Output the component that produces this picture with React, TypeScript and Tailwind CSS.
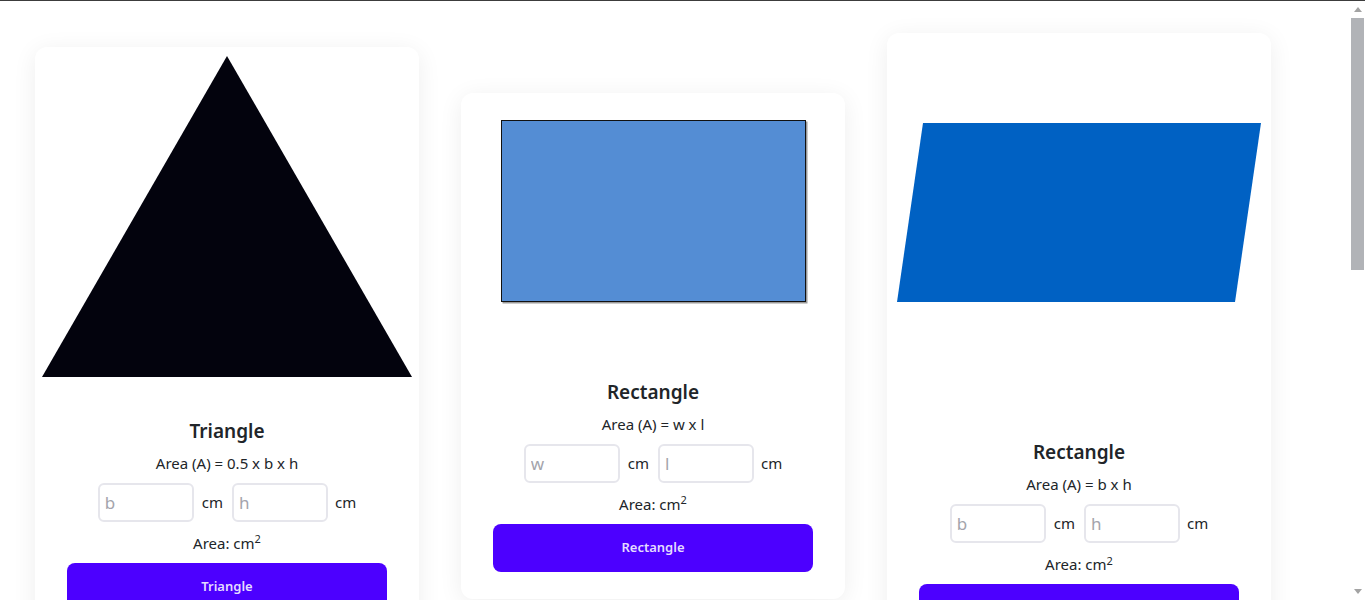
import React from 'react'

type Shape = {
  title: string
  formula: string
  fields: [string, string]
  button: string
  imageHeight: number
  extraBottom: string
  drawing: React.ReactNode
}

const shapes: Shape[] = [
  {
    title: 'Triangle',
    formula: 'Area (A) = 0.5 x b x h',
    fields: ['b', 'h'],
    button: 'Triangle',
    imageHeight: 370,
    extraBottom: 'pb-[34px]',
    drawing: <polygon points="192,9 7,330 377,330" fill="#03030d" />
  },
  {
    title: 'Rectangle',
    formula: 'Area (A) = w x l',
    fields: ['w', 'l'],
    button: 'Rectangle',
    imageHeight: 285,
    extraBottom: 'pb-[27px]',
    drawing: (
      <>
        <rect x="41.5" y="28.5" width="305" height="182" fill="#9a9a9a" />
        <rect x="40.5" y="27.5" width="304" height="181" fill="#548dd4" stroke="#111" strokeWidth="1" />
      </>
    )
  },
  {
    title: 'Rectangle',
    formula: 'Area (A) = b x h',
    fields: ['b', 'h'],
    button: 'Rectangle',
    imageHeight: 405,
    extraBottom: 'pb-[26px]',
    drawing: <polygon points="36,90 374,90 348,269 10,269" fill="#0061c3" />
  }
]

function ShapeCard({ shape }: { shape: Shape }) {
  return (
    <div className="w-96 shrink-0 rounded-xl bg-white shadow-[0_4px_24px_rgba(0,0,0,0.07)]">
      <svg width="384" height={shape.imageHeight} className="block">
        {shape.drawing}
      </svg>
      <div className={`flex flex-col items-center px-8 text-[#212529] ${shape.extraBottom}`}>
        <h2 className="text-[19px] leading-[28px] font-semibold">{shape.title}</h2>
        <p className="mt-[7px] text-[15px] leading-[22px]">{shape.formula}</p>
        <div className="mt-[9px] flex items-center text-[15px]">
          <input
            placeholder={shape.fields[0]}
            className="box-border h-[39px] w-24 rounded-md border-2 border-[#e6e6ec] px-[5px] text-[17px] outline-none placeholder:text-[#a4a4ac]"
          />
          <span className="ml-2">cm</span>
          <input
            placeholder={shape.fields[1]}
            className="ml-[9px] box-border h-[39px] w-24 rounded-md border-2 border-[#e6e6ec] px-[5px] text-[17px] outline-none placeholder:text-[#a4a4ac]"
          />
          <span className="ml-[7px]">cm</span>
        </div>
        <p className="mt-[10px] text-[15px] leading-[22px]">
          Area: cm<sup className="text-[11px]">2</sup>
        </p>
        <button className="mt-[9px] h-12 w-full rounded-lg bg-[#4c00ff] text-[13px] font-semibold text-[#e4dcff]">
          {shape.button}
        </button>
      </div>
    </div>
  )
}

function FakeScrollbar() {
  return (
    <div className="absolute top-0 right-0 bottom-0 flex w-[14px] flex-col items-center bg-white">
      <div className="mt-[6px] h-0 w-0 border-x-[4px] border-b-[5px] border-x-transparent border-b-[#a3a3a3]" />
      <div className="mt-[6px] h-[252px] w-[13px] self-start bg-[#b1b3b7]" />
      <div className="flex-1" />
      <div className="mb-[6px] h-0 w-0 border-x-[4px] border-t-[5px] border-x-transparent border-t-[#a3a3a3]" />
    </div>
  )
}

export default function App() {
  return (
    <div className="flex h-screen flex-col bg-white font-['Noto_Sans','Open_Sans',sans-serif]">
      <div className="h-px shrink-0 bg-[#3c3c3c]" />
      <div className="relative flex-1 overflow-hidden">
        <div className="h-full overflow-y-auto pr-[14px]">
          <div className="flex items-center gap-[42px] pt-8 pb-[690px] pl-[35px]">
            {shapes.map((shape, i) => (
              <ShapeCard key={i} shape={shape} />
            ))}
          </div>
        </div>
        <FakeScrollbar />
      </div>
    </div>
  )
}
